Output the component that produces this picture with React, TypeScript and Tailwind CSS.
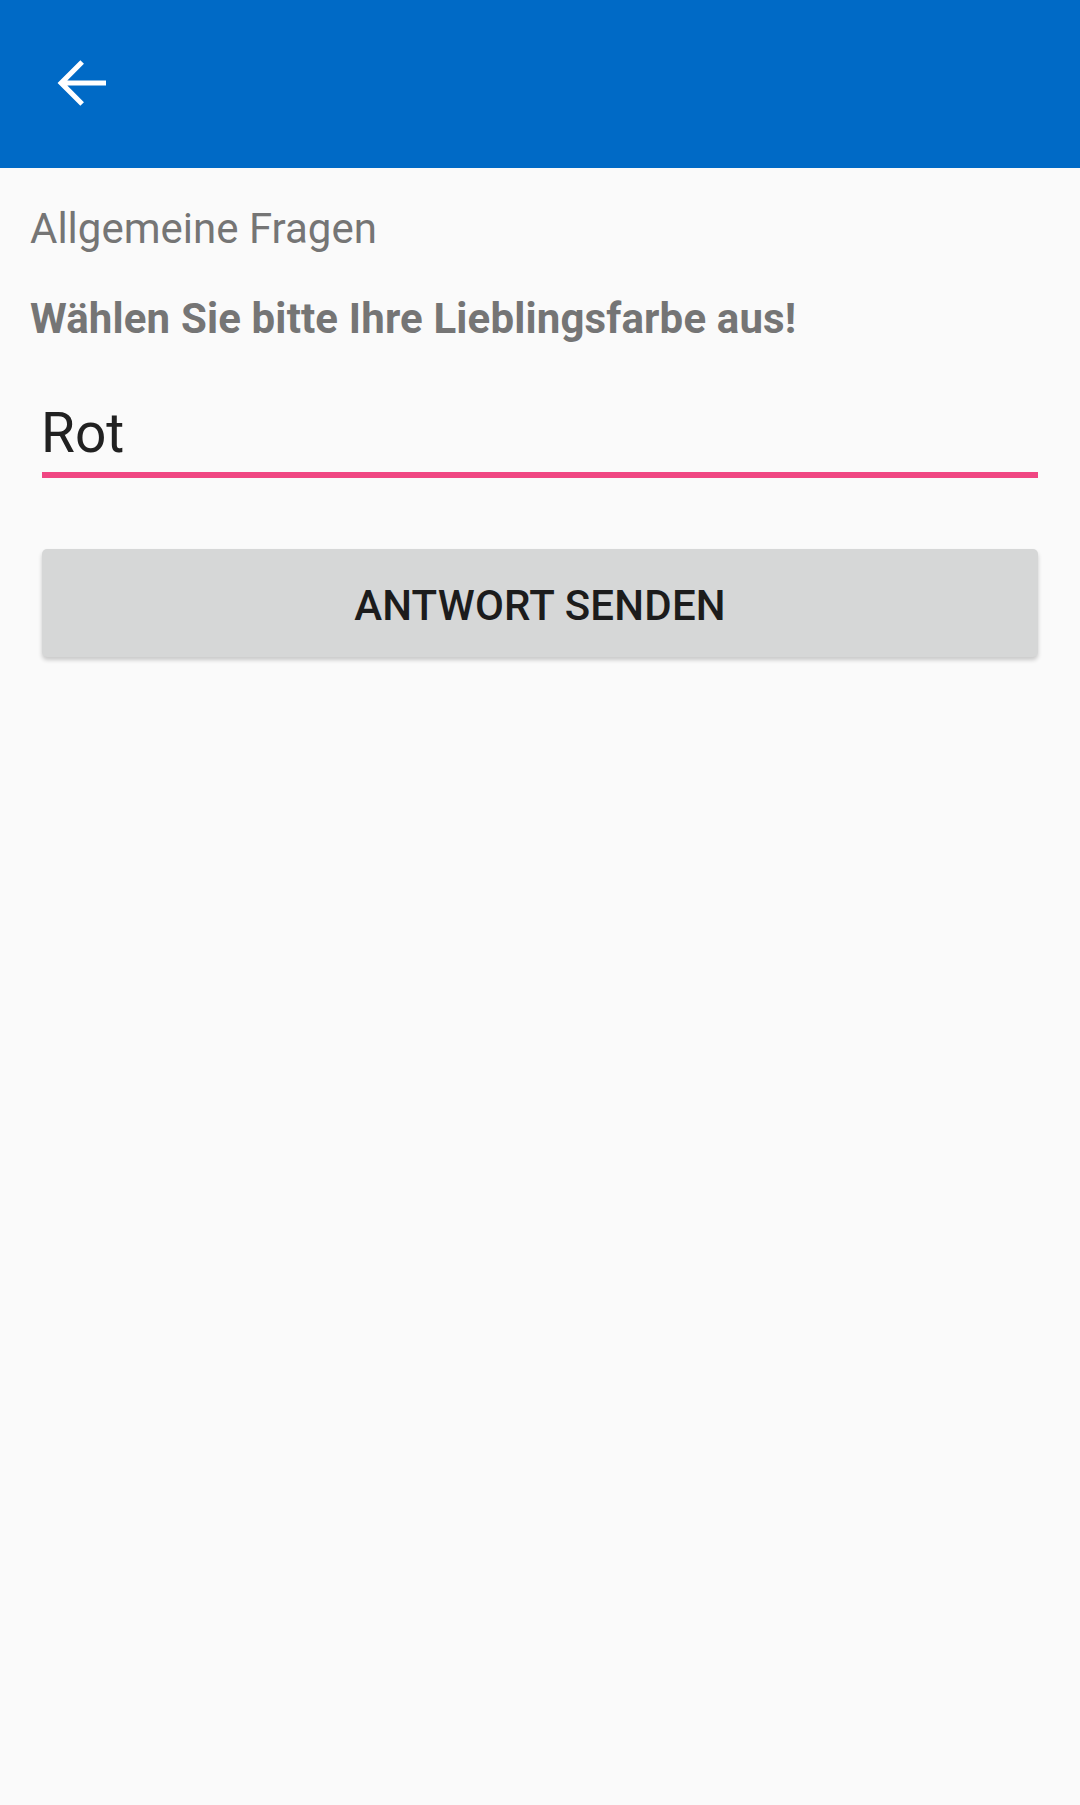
import React from "react";

const BackArrow = () => (
    <svg viewBox="0 0 24 24" className="w-[72px] h-[72px]" fill="#ffffff">
        <path d="M20 11.15H7.1l5.55-5.55-1.2-1.2L3.85 12l7.6 7.6 1.2-1.2-5.55-5.55H20v-1.7z" />
    </svg>
);

const App = () => {
    return (
        <div className="min-h-[1805px] w-full bg-[#fafafa] font-['Roboto',sans-serif]">
            {/* Toolbar */}
            <header className="h-[168px] bg-[#006ac6] flex items-start">
                <button className="ml-[46px] mt-[47px]">
                    <BackArrow />
                </button>
            </header>

            {/* Question */}
            <main className="flex flex-col">
                <p className="mt-[36px] pl-[30px] text-[42px] leading-[50px] text-[#757575]">
                    Allgemeine Fragen
                </p>
                <p className="mt-[40px] pl-[30px] text-[42px] leading-[50px] font-bold text-[#757575] tracking-[0.15px]">
                    Wählen Sie bitte Ihre Lieblingsfarbe aus!
                </p>

                <div className="mt-[57px] ml-[42px] w-[996px]">
                    <div className="text-[55px] leading-[64px] text-[#212121] -ml-[1px]">Rot</div>
                    <div className="mt-[7px] h-[6px] bg-[#f04682]"></div>
                </div>

                <button className="mt-[71px] ml-[42px] w-[996px] h-[108px] bg-[#d6d7d7] rounded-[5px] shadow-[0_3px_4px_rgba(0,0,0,0.2)] flex items-center justify-center pt-[5px]">
                    <span className="text-[42px] font-medium text-[#1c1c1c] tracking-[0.2px]">ANTWORT SENDEN</span>
                </button>
            </main>
        </div>
    );
};

export default App;
